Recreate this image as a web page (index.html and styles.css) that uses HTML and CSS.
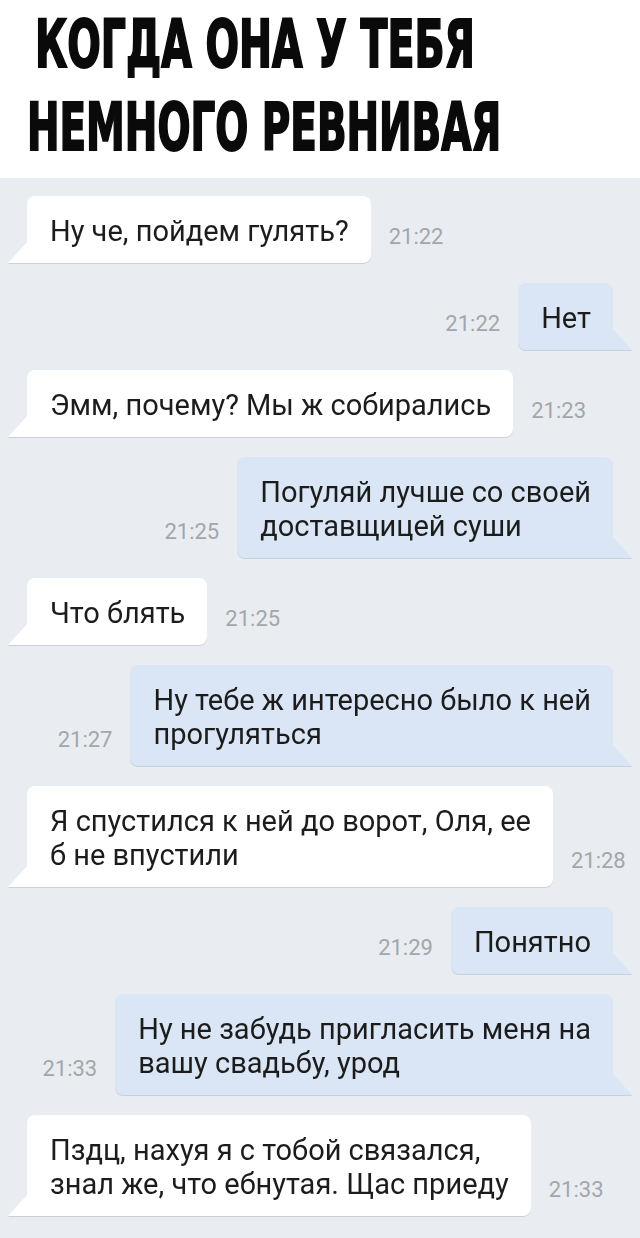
FILE: index.html
```html
<!DOCTYPE html>
<html lang="ru">
<head>
    <meta charset="UTF-8">
    <meta name="viewport" content="width=device-width, initial-scale=1.0">
    <title>Когда она у тебя немного ревнивая</title>
    <link rel="stylesheet" href="styles.css">
</head>
<body>
    <div class="header">
        <h1><span class="line-1">КОГДА ОНА У ТЕБЯ</span><span class="line-2">НЕМНОГО РЕВНИВАЯ</span></h1>
    </div>
    <div class="chat">
        <div class="msg in">
            <div class="bubble">Ну че, пойдем гулять?</div>
            <span class="time">21:22</span>
        </div>
        <div class="msg out">
            <span class="time">21:22</span>
            <div class="bubble">Нет</div>
        </div>
        <div class="msg in">
            <div class="bubble">Эмм, почему? Мы ж собирались</div>
            <span class="time">21:23</span>
        </div>
        <div class="msg out">
            <span class="time">21:25</span>
            <div class="bubble">Погуляй лучше со своей<br>доставщицей суши</div>
        </div>
        <div class="msg in">
            <div class="bubble">Что блять</div>
            <span class="time">21:25</span>
        </div>
        <div class="msg out">
            <span class="time">21:27</span>
            <div class="bubble">Ну тебе ж интересно было к ней<br>прогуляться</div>
        </div>
        <div class="msg in">
            <div class="bubble">Я спустился к ней до ворот, Оля, ее<br>б не впустили</div>
            <span class="time">21:28</span>
        </div>
        <div class="msg out">
            <span class="time">21:29</span>
            <div class="bubble">Понятно</div>
        </div>
        <div class="msg out">
            <span class="time">21:33</span>
            <div class="bubble">Ну не забудь пригласить меня на<br>вашу свадьбу, урод</div>
        </div>
        <div class="msg in">
            <div class="bubble">Пздц, нахуя я с тобой связался,<br>знал же, что ебнутая. Щас приеду</div>
            <span class="time">21:33</span>
        </div>
    </div>
</body>
</html>
```

FILE: styles.css
```css
body {
    margin: 0;
    background-color: #e9edf1;
    font-family: Roboto, 'Noto Sans', sans-serif;
}
.header {
    background-color: white;
    height: 178px;
    padding: 3px 0 0 0;
    box-sizing: border-box;
}
h1 {
    margin: 0;
    font-family: 'DejaVu Sans Condensed', 'DejaVu Sans', sans-serif;
    font-stretch: condensed;
    font-weight: bold;
    font-size: 66px;
    line-height: 83px;
    color: #0a0a0a;
    -webkit-text-stroke: 2px #0a0a0a;
}
h1 span {
    display: block;
    white-space: nowrap;
    transform-origin: left center;
}
.line-1 {
    margin-left: 35px;
    transform: scaleX(0.665);
}
.line-2 {
    margin-left: 27px;
    transform: scaleX(0.655);
}
.chat {
    display: flex;
    flex-direction: column;
    gap: 20px;
    padding: 18px 27px 20px 27px;
}
.msg {
    display: flex;
    align-items: flex-end;
    gap: 18px;
}
.msg.out {
    justify-content: flex-end;
}
.bubble {
    position: relative;
    padding: 18px 22px 15px 23px;
    font-size: 29px;
    line-height: 34px;
    color: #1c1c1c;
    border-radius: 8px;
    white-space: nowrap;
    filter: drop-shadow(0 1px 0 rgba(60, 80, 110, 0.18));
}
.bubble::before {
    content: '';
    position: absolute;
    bottom: 0;
    width: 20px;
    height: 22px;
}
.in .bubble {
    background-color: white;
    border-bottom-left-radius: 0;
}
.in .bubble::before {
    left: -19px;
    background-color: white;
    clip-path: polygon(100% 0, 100% 100%, 0 100%);
}
.out .bubble {
    background-color: #dae6f5;
    border-bottom-right-radius: 0;
}
.out .bubble::before {
    right: -19px;
    background-color: #dae6f5;
    clip-path: polygon(0 0, 100% 100%, 0 100%);
}
.time {
    font-size: 22px;
    line-height: 24px;
    color: #a3a6aa;
    padding-bottom: 14px;
}
```
